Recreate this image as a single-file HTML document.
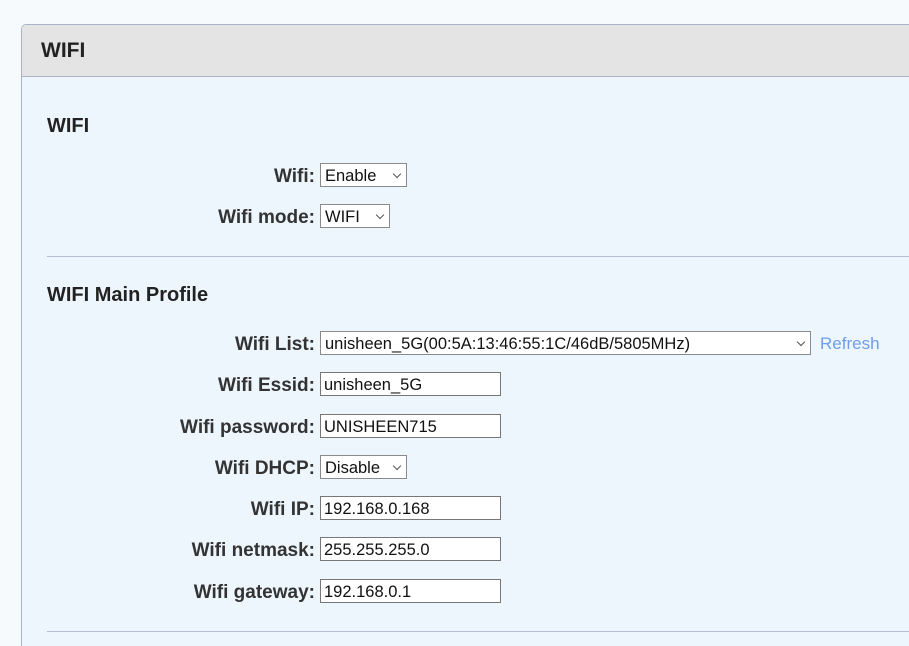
<!DOCTYPE html>
<html><head><meta charset="utf-8"><style>
html,body{margin:0;width:909px;height:646px;overflow:hidden}
body{background:#f7fafd;font-family:"Liberation Sans",Arial,sans-serif;position:relative}
.panel{position:absolute;left:21px;top:24px;width:887px;height:622px;border-left:1px solid #aab3cc;border-top:1px solid #aab3cc;border-radius:5px 0 0 0;background:#edf5fd}
.hdr{position:absolute;left:0;top:0;right:0;height:51px;background:#e4e4e4;border-bottom:1px solid #aab3cc;border-radius:5px 0 0 0}
.hdr span{position:absolute;left:19px;top:14px;font-weight:bold;font-size:21px;color:#222}
h2{position:absolute;margin:0;font-size:20px;font-weight:bold;color:#222;left:47px}
.sep{position:absolute;left:47px;width:862px;height:1px;background:#b5bdd3}
.lbl{position:absolute;right:594px;font-weight:bold;font-size:19px;color:#333;white-space:nowrap}
.ctl{position:absolute;left:320px;height:22px;border:1px solid #8a8a8a;background:#fff;font-size:16.5px;color:#111;line-height:24px;padding-left:4px;box-sizing:content-box;white-space:nowrap}
.ctl.in{padding-left:3px;border-color:#777}
.arr{position:absolute;right:6px;top:7px;width:5px;height:5px;border-right:1px solid #555;border-bottom:1px solid #555;transform:rotate(45deg)}
.ref{position:absolute;left:820px;top:334px;font-size:17px;color:#6f9ee6}
</style></head><body>
<div class="panel"><div class="hdr"><span>WIFI</span></div></div>
<h2 style="top:115px">WIFI</h2>
<div class="lbl" style="top:166px">Wifi:</div>
<div class="ctl" style="top:163px;width:81px">Enable<i class="arr"></i></div>
<div class="lbl" style="top:207px">Wifi mode:</div>
<div class="ctl" style="top:204px;width:64px">WIFI<i class="arr"></i></div>
<div class="sep" style="top:256px"></div>
<h2 style="top:284px">WIFI Main Profile</h2>
<div class="lbl" style="top:334px">Wifi List:</div>
<div class="ctl" style="top:331px;width:485px">unisheen_5G(00:5A:13:46:55:1C/46dB/5805MHz)<i class="arr"></i></div>
<a class="ref">Refresh</a>
<div class="lbl" style="top:375px">Wifi Essid:</div>
<div class="ctl in" style="top:372px;width:176px">unisheen_5G</div>
<div class="lbl" style="top:417px">Wifi password:</div>
<div class="ctl in" style="top:414px;width:176px">UNISHEEN715</div>
<div class="lbl" style="top:458px">Wifi DHCP:</div>
<div class="ctl" style="top:455px;width:81px">Disable<i class="arr"></i></div>
<div class="lbl" style="top:499px">Wifi IP:</div>
<div class="ctl in" style="top:496px;width:176px">192.168.0.168</div>
<div class="lbl" style="top:540px">Wifi netmask:</div>
<div class="ctl in" style="top:537px;width:176px">255.255.255.0</div>
<div class="lbl" style="top:582px">Wifi gateway:</div>
<div class="ctl in" style="top:579px;width:176px">192.168.0.1</div>
<div class="sep" style="top:631px"></div>
</body></html>
